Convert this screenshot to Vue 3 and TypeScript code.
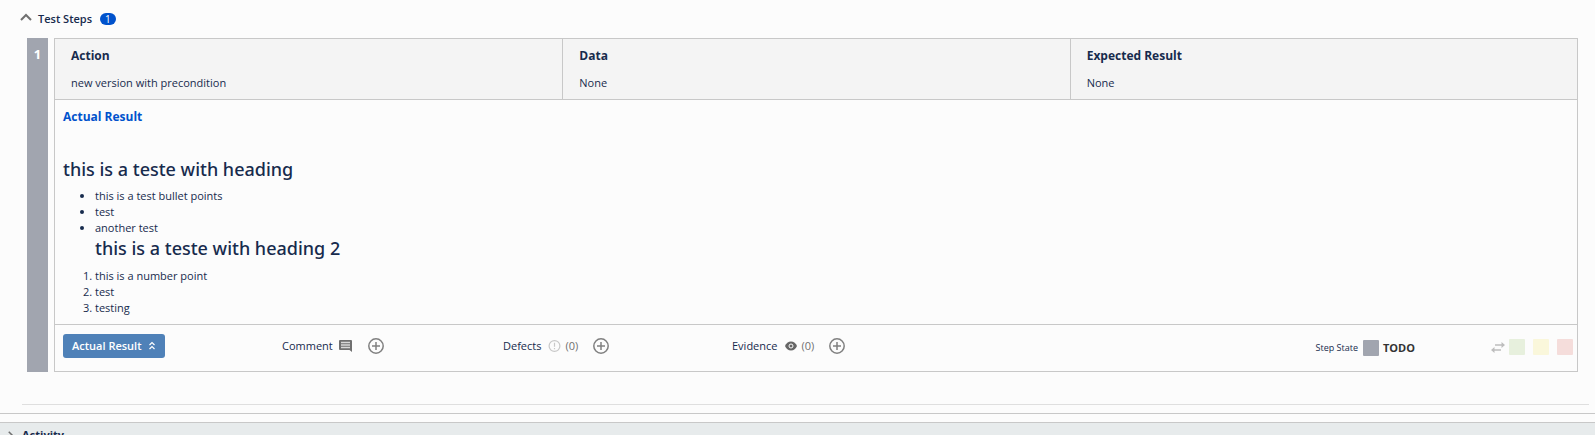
<script setup lang="ts">
import { ref } from 'vue'

interface Field { label: string; value: string }
interface Status { name: string; tone: string }

const fields: Field[] = [
  { label: 'Action', value: 'new version with precondition' },
  { label: 'Data', value: 'None' },
  { label: 'Expected Result', value: 'None' },
]
const statuses: Status[] = [
  { name: 'Pass', tone: 'pass' },
  { name: 'Executing', tone: 'executing' },
  { name: 'Fail', tone: 'fail' },
]
const stepsOpen = ref(true)
const resultOpen = ref(true)
</script>

<template>
  <div class="page">
    <section class="steps">
      <h2 class="steps-title">
        <button class="toggle" type="button" :aria-expanded="stepsOpen" @click="stepsOpen = !stepsOpen">
          <svg class="chevron" viewBox="0 0 12 8" aria-hidden="true"><path d="M1 7 6 2l5 5" /></svg>
          <span>Test Steps</span>
          <span class="count">1</span>
        </button>
      </h2>

      <div v-if="stepsOpen" class="step">
        <div class="step-number">1</div>
        <div class="card">
          <div class="fields">
            <div v-for="field in fields" :key="field.label" class="field">
              <h3>{{ field.label }}</h3>
              <p>{{ field.value }}</p>
            </div>
          </div>

          <div v-if="resultOpen" class="result">
            <h3 class="result-title">Actual Result</h3>
            <h4>this is a teste with heading</h4>
            <ul>
              <li>this is a test bullet points</li>
              <li>test</li>
              <li>another test
                <h4>this is a teste with heading 2</h4>
              </li>
            </ul>
            <ol>
              <li>this is a number point</li>
              <li>test</li>
              <li>testing</li>
            </ol>
          </div>

          <div class="footer">
            <div>
              <button class="result-button" type="button" @click="resultOpen = !resultOpen">
                <span>Actual Result</span>
                <svg width="8" height="10" viewBox="0 0 8 10" aria-hidden="true"><path d="M1.500 4 4 1.500 6.500 4M1.500 8 4 5.500 6.500 8" /></svg>
              </button>
            </div>
            <div class="item">
              <span>Comment</span>
              <svg class="comment" width="14" height="12" viewBox="0 0 14 12" aria-hidden="true">
                <path d="M1 0h11A1 1 0 0 1 13 1V12l-2.500-2H1A1 1 0 0 1 0 9V1A1 1 0 0 1 1 0Z" fill="#707070" />
                <path d="M2 2.500h9M2 5h9M2 7.500h9" stroke="#d8d8d8" stroke-width="1.500" />
              </svg>
              <button class="add" type="button" aria-label="Add comment">
                <svg width="16" height="16" viewBox="0 0 16 16" aria-hidden="true"><circle cx="8" cy="8" r="7.200" /><path d="M8 4v8M4 8h8" /></svg>
              </button>
            </div>
            <div class="item">
              <span>Defects</span>
              <svg class="defect" width="13" height="12" viewBox="0 0 13 12" aria-hidden="true">
                <circle cx="6.500" cy="6" r="5.400" /><path d="M6.500 2.800v4M6.500 7.900v1.400" />
              </svg>
              <span class="total">(0)</span>
              <button class="add" type="button" aria-label="Add defect">
                <svg width="16" height="16" viewBox="0 0 16 16" aria-hidden="true"><circle cx="8" cy="8" r="7.200" /><path d="M8 4v8M4 8h8" /></svg>
              </button>
            </div>
            <div class="item">
              <span>Evidence</span>
              <svg class="eye" width="12" height="10" viewBox="0 0 12 10" aria-hidden="true">
                <path d="M6 .5C3.300.5 1 2.400 0 5c1 2.600 3.300 4.500 6 4.500s5-1.900 6-4.500C11 2.400 8.700.5 6 .5Z" fill="#666" />
                <circle cx="6" cy="5" r="2" fill="#666" stroke="#fcfcfc" />
              </svg>
              <span class="total">(0)</span>
              <button class="add" type="button" aria-label="Add evidence">
                <svg width="16" height="16" viewBox="0 0 16 16" aria-hidden="true"><circle cx="8" cy="8" r="7.200" /><path d="M8 4v8M4 8h8" /></svg>
              </button>
            </div>
            <div class="state">
              <span class="state-label">Step State</span>
              <span class="swatch"></span>
              <strong>TODO</strong>
            </div>
            <div class="choices">
              <svg width="14" height="11" viewBox="0 0 14 11" aria-hidden="true">
                <path d="M4 3h7M3 8h7" stroke="#bdbdbd" stroke-width="1.500" />
                <path d="M10.500 0v6L14 3zM3.500 5v6L0 8z" fill="#bdbdbd" />
              </svg>
              <button v-for="status in statuses" :key="status.name" type="button" class="swatch" :class="status.tone" :aria-label="status.name"></button>
            </div>
          </div>
        </div>
      </div>
    </section>

    <section class="activity">
      <button class="toggle" type="button" aria-expanded="false">
        <svg class="chevron" viewBox="0 0 8 12" aria-hidden="true"><path d="m1 1 5 5-5 5" /></svg>
        <span>Activity</span>
      </button>
    </section>
  </div>
</template>

<style>
body { margin: 0; background: #fcfcfc; }
</style>

<style scoped>
.page {
  box-sizing: border-box;
  height: 100vh;
  overflow: hidden;
  color: #172b4d;
  font: 11px/16px "Open Sans", "Noto Sans", sans-serif;
}
h2, h3, h4, p, ul, ol { margin: 0; }
button { padding: 0; border: 0; background: none; color: inherit; font: inherit; cursor: pointer; }
svg { display: block; flex: none; fill: none; }

.steps { padding: 11px 17px 0 20px; border-bottom: 1px solid #c8c8c8; }
.steps::after { content: ""; display: block; height: 1px; margin: 32px -11px 8px 2px; background: #dfdfdf; }
.steps-title { font-size: 11px; line-height: 16px; }
.toggle { display: flex; align-items: center; font-weight: 700; }
.chevron { stroke: #707070; stroke-width: 2; }
.steps .toggle { font-weight: 600; }
.steps .chevron { width: 12px; height: 8px; margin-right: 6px; margin-bottom: 4px; }
.count {
  margin-left: 8px;
  padding: 0 5px;
  border-radius: 6px;
  background: #0052cc;
  color: #fff;
  font-size: 10px;
  font-weight: 400;
  line-height: 12px;
}

.step { display: flex; gap: 6px; margin: 11px 0 0 7px; }
.step-number {
  flex: none;
  width: 21px;
  padding-top: 7px;
  box-sizing: border-box;
  background: #a1a5af;
  color: #fff;
  font-size: 13px;
  font-weight: 700;
  line-height: 18px;
  text-align: center;
}
.card { flex: 1; min-width: 0; border: 1px solid #c8c8c8; }
.fields { display: grid; grid-template-columns: repeat(3, 1fr); background: #f4f4f4; }
.field { padding: 8px 16px; }
.field + .field { border-left: 1px solid #c8c8c8; }
h3 { font-size: 12px; line-height: 18px; font-weight: 700; }
.field p { margin-top: 10px; line-height: 16px; }

.result { padding: 8px 8px; border-top: 1px solid #c8c8c8; }
.result-title { margin-bottom: 31px; color: #0052cc; }
h4 { font-family: "Noto Sans", "Open Sans", sans-serif; font-size: 18px; line-height: 24px; font-weight: 500; }
.result ul, .result ol { padding-left: 32px; }
.result > ul { margin-top: 7px; }
.result ol { margin-top: 8px; }

.footer {
  display: grid;
  grid-template-columns: 219px 221px 229px 1fr auto auto;
  align-items: start;
  padding: 9px 4px 9px 8px;
  border-top: 1px solid #c8c8c8;
}
.result-button {
  display: flex;
  align-items: center;
  gap: 6px;
  height: 24px;
  padding: 0 9px;
  border-radius: 3px;
  background: #4f81b8;
  color: #fff;
  font-weight: 600;
}
.result-button svg { stroke: #fff; stroke-width: 1.200; }
.item { display: flex; align-items: center; height: 24px; }
.comment { margin-left: 6px; }
.defect { margin: 0 4px 0 7px; stroke: #c8c8c8; stroke-width: 1.200; }
.eye { margin: 0 4px 0 8px; }
.total { color: #707070; }
.add { margin-left: 15px; }
.add svg { stroke: #808080; stroke-width: 1.500; }
.state { display: flex; align-items: center; height: 28px; }
.state-label { font-size: 9px; }
.swatch { width: 16px; height: 16px; border-radius: 1px; background: #a1a5af; }
.state .swatch { margin: 0 4px 0 5px; }
.state strong { color: #333; font-size: 11px; }
.choices { display: flex; align-items: center; height: 26px; margin-left: 76px; }
.choices svg { margin-right: 4px; }
.choices .swatch + .swatch { margin-left: 8px; }
.choices .pass { background: #e7f0dd; }
.choices .executing { background: #faf7db; }
.choices .fail { background: #f5dddb; }

.activity { height: 40px; margin-top: 8px; padding: 4px 8px; border-top: 1px solid #c8c8c8; background: #e7ebec; }
.activity .chevron { width: 6px; height: 9px; margin-right: 8px; }
</style>
